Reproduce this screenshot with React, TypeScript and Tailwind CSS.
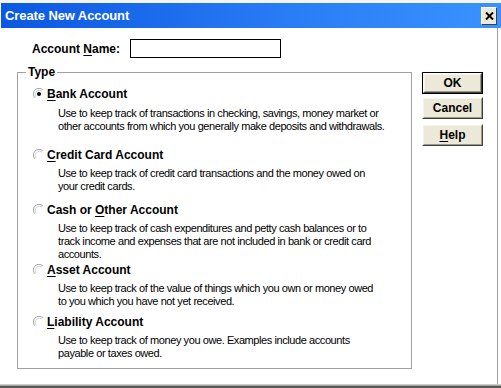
import React from "react";

const font = { fontFamily: '"Liberation Sans", Arial, sans-serif' };

function Radio({ checked }: { checked?: boolean }) {
  return (
    <svg width="12" height="12" viewBox="0 0 12 12" className="shrink-0">
      <circle cx="6" cy="6" r="5.5" fill="#fff" />
      <path d="M10 2 A5.5 5.5 0 0 0 2 10" fill="none" stroke="#a8a8a8" strokeWidth="1" />
      <path d="M9 3 A4.3 4.3 0 0 0 3 9" fill="none" stroke="#d4d4d4" strokeWidth="1" />
      {checked && <circle cx="6" cy="6" r="2" fill="#000" />}
    </svg>
  );
}

function U({ children }: { children: React.ReactNode }) {
  return <span className="underline underline-offset-[2px]">{children}</span>;
}

type Item = {
  head: React.ReactNode;
  lines: string[];
  checked?: boolean;
  mt: string;
  dmt: string;
};

const items: Item[] = [
  {
    head: (
      <>
        <U>B</U>ank Account
      </>
    ),
    lines: [
      "Use to keep track of transactions in checking, savings, money market or",
      "other accounts from which you generally make deposits and withdrawals.",
    ],
    checked: true,
    mt: "mt-[8px]",
    dmt: "mt-[6px]",
  },
  {
    head: (
      <>
        <U>C</U>redit Card Account
      </>
    ),
    lines: [
      "Use to keep track of credit card transactions and the money owed on",
      "your credit cards.",
    ],
    mt: "mt-[15px]",
    dmt: "mt-[5px]",
  },
  {
    head: (
      <>
        Cash or <U>O</U>ther Account
      </>
    ),
    lines: [
      "Use to keep track of cash expenditures and petty cash balances or to",
      "track income and expenses that are not included in bank or credit card",
      "accounts.",
    ],
    mt: "mt-[10px]",
    dmt: "mt-[5px]",
  },
  {
    head: (
      <>
        <U>A</U>sset Account
      </>
    ),
    lines: [
      "Use to keep track of the value of things which you own or money owed",
      "to you which you have not yet received.",
    ],
    mt: "mt-[2px]",
    dmt: "mt-[5px]",
  },
  {
    head: (
      <>
        <U>L</U>iability Account
      </>
    ),
    lines: [
      "Use to keep track of money you owe. Examples include accounts",
      "payable or taxes owed.",
    ],
    mt: "mt-[7px]",
    dmt: "mt-[5px]",
  },
];

function Button({
  children,
  isDefault,
  className,
}: {
  children: React.ReactNode;
  isDefault?: boolean;
  className?: string;
}) {
  return (
    <div
      className={`w-[61px] h-[22px] ${isDefault ? "border border-black" : ""} ${className ?? ""}`}
    >
      <div className="w-full h-full border border-t-white border-l-white border-r-[#404040] border-b-[#404040]">
        <div className="w-full h-full bg-[#ece9d8] border border-t-[#f4f3ee] border-l-[#f4f3ee] border-r-[#9d9a8a] border-b-[#9d9a8a] flex items-center justify-center text-[12px] font-bold text-black leading-none">
          {children}
        </div>
      </div>
    </div>
  );
}

export default function App() {
  return (
    <div
      className="w-[501px] h-[388px] bg-white flex flex-col overflow-hidden text-black"
      style={font}
    >
      <div className="h-[3px] bg-[#f5f5f0]" />
      <div className="h-[25px] ml-[1px] bg-[linear-gradient(to_right,#0b58e2,#2a7ef5_60%,#3a92ff)] flex items-center pl-[4px] pr-[4px]">
        <span className="text-white font-bold text-[13px] leading-none tracking-[-0.1px]">
          Create New Account
        </span>
        <div className="ml-auto w-[16px] h-[18px] bg-[#ece9d8] border border-t-white border-l-white border-r-[#404040] border-b-[#404040] flex items-center justify-center">
          <svg width="9" height="8" viewBox="0 0 9 8">
            <path d="M1 0.5 L8 7.5 M8 0.5 L1 7.5" stroke="#000" strokeWidth="2" />
          </svg>
        </div>
      </div>
      <div className="flex-1 flex border-r border-r-[#a0a0a0] mr-[3px]">
        <div className="w-[418px] flex flex-col">
          <div className="flex items-center mt-[11px] h-[19px]">
            <span className="ml-[32px] text-[12px] font-bold leading-none">
              Account <U>N</U>ame:
            </span>
            <div className="ml-auto mr-[137px] w-[151px] h-[19px] border border-black bg-white" />
          </div>
          <fieldset className="ml-[17px] w-[395px] h-[304px] mt-[7px] border border-[#a0a0a0] p-0 m-0 min-w-0">
            <legend className="ml-[8px] px-[2px] text-[12px] font-bold leading-[14px]">
              Type
            </legend>
            {items.map((it, i) => (
              <div key={i} className={`${it.mt} flex flex-col`}>
                <div className="flex items-center h-[14px] ml-[15px]">
                  <Radio checked={it.checked} />
                  <span className="ml-[2px] text-[12px] font-bold leading-[14px]">
                    {it.head}
                  </span>
                </div>
                <div className={`${it.dmt} ml-[40px] text-[11px] leading-[13px] tracking-[-0.42px] whitespace-nowrap`}>
                  {it.lines.map((l, j) => (
                    <div key={j}>{l}</div>
                  ))}
                </div>
              </div>
            ))}
          </fieldset>
        </div>
        <div className="flex flex-col mt-[44px] ml-[4px]">
          <Button isDefault>OK</Button>
          <Button className="mt-[3px]">Cancel</Button>
          <Button className="mt-[5px]">
            <U>H</U>elp
          </Button>
        </div>
      </div>
      <div className="h-[1px] bg-[#d4d0c8]" />
      <div className="h-[1px] bg-[#a0a0a0]" />
      <div className="h-[2px] bg-[#5a5a5a]" />
    </div>
  );
}
